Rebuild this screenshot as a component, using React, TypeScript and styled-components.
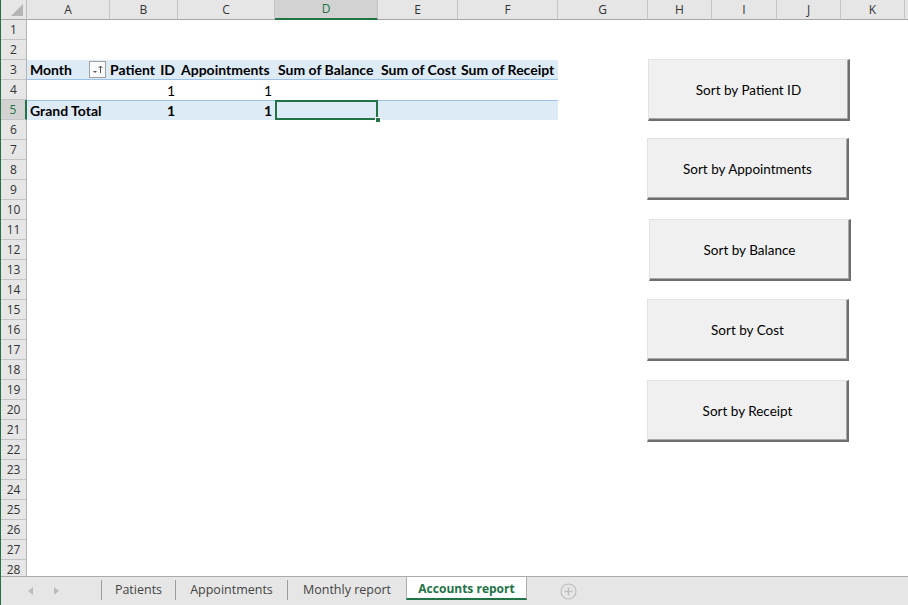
import React from "react";
import styled, { createGlobalStyle, css } from "styled-components";

const GREEN = "#217346";
const HEAD_BG = "#e6e6e6";
const PIVOT_BG = "#ddebf7";
const PIVOT_LINE = "#9bc2e6";

const GlobalStyle = createGlobalStyle`
  html, body { margin: 0; padding: 0; background: #fff; overflow: hidden; }
  *, *::before, *::after { box-sizing: border-box; }
`;

const COLS = [
  { name: "A", w: 83 },
  { name: "B", w: 68 },
  { name: "C", w: 97 },
  { name: "D", w: 103 },
  { name: "E", w: 80 },
  { name: "F", w: 100 },
  { name: "G", w: 90 },
  { name: "H", w: 64 },
  { name: "I", w: 65 },
  { name: "J", w: 64 },
  { name: "K", w: 64 },
  { name: "", w: 0 },
];

const Window = styled.div`
  width: 908px;
  height: 605px;
  display: flex;
  flex-direction: column;
  border-left: 1px solid ${GREEN};
  background: #fff;
  overflow: hidden;
`;

const Sheet = styled.div`
  position: relative;
  height: 576px;
  flex: 0 0 576px;
  overflow: hidden;
`;

const Grid = styled.div`
  display: grid;
  grid-template-columns: 26px ${COLS.filter((c) => c.w).map((c) => c.w + "px").join(" ")} 1fr;
  grid-auto-rows: 20px;
`;

const Corner = styled.div`
  background: ${HEAD_BG};
  border-right: 1px solid #bdbdbd;
  border-bottom: 1px solid #a6a6a6;
  display: flex;
  align-items: flex-end;
  justify-content: flex-end;
  padding: 0 3px 3px 0;
`;

const ColHeader = styled.div<{ $active?: boolean }>`
  background: ${(p) => (p.$active ? "#d2d2d2" : HEAD_BG)};
  color: ${(p) => (p.$active ? GREEN : "#333")};
  border-right: 1px solid #c4c4c4;
  border-bottom: ${(p) => (p.$active ? `2px solid ${GREEN}` : "1px solid #a6a6a6")};
  font-family: "Open Sans", "Noto Sans", sans-serif;
  font-size: 12px;
  display: flex;
  align-items: center;
  justify-content: center;
  padding-bottom: 1px;
`;

const RowHeader = styled.div<{ $active?: boolean }>`
  background: ${(p) => (p.$active ? "#d2d2d2" : HEAD_BG)};
  color: ${(p) => (p.$active ? GREEN : "#333")};
  border-bottom: 1px solid #c4c4c4;
  border-right: ${(p) => (p.$active ? `2px solid ${GREEN}` : "1px solid #b4b4b4")};
  font-family: "Open Sans", "Noto Sans", sans-serif;
  font-size: 12px;
  display: flex;
  align-items: center;
  justify-content: center;
`;

type Band = "head" | "total" | undefined;
type Layout = "left" | "right" | "spread" | "wide";

const Cell = styled.div<{ $band?: Band; $layout?: Layout; $bold?: boolean; $selected?: boolean }>`
  position: relative;
  display: flex;
  align-items: center;
  justify-content: ${(p) =>
    p.$layout === "spread" || p.$layout === "wide"
      ? "space-between"
      : p.$layout === "right"
      ? "flex-end"
      : "flex-start"};
  padding: ${(p) => (p.$layout === "wide" ? "0 3px 0 0" : "0 3px")};
  font-family: Lato, "Liberation Sans", sans-serif;
  font-size: 14px;
  font-weight: ${(p) => (p.$bold ? 700 : 400)};
  color: #000;
  white-space: nowrap;
  background: ${(p) => (p.$band ? PIVOT_BG : "#fff")};
  ${(p) =>
    p.$band === "head" &&
    css`
      border-bottom: 1px solid ${PIVOT_LINE};
    `}
  ${(p) =>
    p.$band === "total" &&
    css`
      border-top: 1px solid ${PIVOT_LINE};
    `}
  ${(p) =>
    p.$selected &&
    css`
      &::after {
        content: "";
        position: absolute;
        top: -1px;
        left: 0;
        right: 0;
        bottom: 0;
        border: 2px solid ${GREEN};
      }
      &::before {
        content: "";
        position: absolute;
        right: -3px;
        bottom: -3px;
        width: 6px;
        height: 6px;
        background: ${GREEN};
        border: 1px solid #fff;
        z-index: 2;
      }
    `}
`;

const FilterBtn = styled.span`
  display: inline-flex;
  width: 17px;
  height: 17px;
  margin-right: 1px;
`;

const SortButton = styled.button<{ $top: number; $left: number }>`
  position: absolute;
  top: ${(p) => p.$top}px;
  left: ${(p) => p.$left}px;
  width: 202px;
  height: 62px;
  background: #f0f0f0;
  border: none;
  border-top: 1px solid #e2e2e2;
  border-left: 1px solid #e2e2e2;
  border-right: 2px solid #6e6e6e;
  border-bottom: 2px solid #6e6e6e;
  box-shadow: inset -1px -1px 0 #a8a8a8;
  font-family: Lato, "Liberation Sans", sans-serif;
  font-size: 13.5px;
  color: #000;
  padding: 0;
  cursor: default;
`;

const TabBar = styled.div`
  height: 29px;
  flex: 0 0 29px;
  display: flex;
  align-items: flex-start;
  background: ${HEAD_BG};
  border-top: 1px solid #ababab;
`;

const Nav = styled.div`
  width: 100px;
  height: 28px;
  display: flex;
  align-items: center;
  gap: 21px;
  padding-left: 27px;
`;

const Tab = styled.div<{ $w: number; $active?: boolean }>`
  width: ${(p) => p.$w}px;
  display: flex;
  align-items: center;
  justify-content: center;
  font-family: "Open Sans", "Noto Sans", sans-serif;
  white-space: nowrap;
  ${(p) =>
    p.$active
      ? css`
          height: 24px;
          margin-top: -1px;
          background: #fff;
          border-left: 1px solid #ababab;
          border-right: 1px solid #ababab;
          border-top: 1px solid #ababab;
          border-bottom: 2px solid ${GREEN};
          color: ${GREEN};
          font-weight: 700;
          font-size: 12px;
          padding-top: 2px;
        `
      : css`
          height: 20px;
          margin-top: 3px;
          border-left: 1px solid #9c9c9c;
          color: #444;
          font-size: 12.5px;
          padding-bottom: 1px;
        `}
`;

const AddSheet = styled.div`
  margin-left: 33px;
  height: 28px;
  display: flex;
  align-items: center;
`;

const Arrow = ({ dir }: { dir: "left" | "right" }) => (
  <svg width="5" height="8" viewBox="0 0 5 8">
    <polygon points={dir === "left" ? "5,0 0,4 5,8" : "0,0 5,4 0,8"} fill="#bcbcbc" />
  </svg>
);

const FilterIcon = () => (
  <svg width="17" height="17" viewBox="0 0 17 17">
    <rect x="0.5" y="0.5" width="16" height="16" fill="#fafafa" stroke="#a0a0a0" />
    <polygon points="4,10 8,10 6,12" fill="#555" />
    <line x1="11.5" y1="5" x2="11.5" y2="12" stroke="#555" strokeWidth="1" />
    <polyline points="9.5,7 11.5,5 13.5,7" fill="none" stroke="#555" strokeWidth="1" />
  </svg>
);

const CornerTriangle = () => (
  <svg width="12" height="12" viewBox="0 0 12 12">
    <polygon points="12,0 12,12 0,12" fill="#b5b5b5" />
  </svg>
);

const PlusIcon = () => (
  <svg width="17" height="17" viewBox="0 0 17 17">
    <circle cx="8.5" cy="8.5" r="7.5" fill="none" stroke="#bfbfbf" strokeWidth="1.2" />
    <line x1="8.5" y1="4.5" x2="8.5" y2="12.5" stroke="#bfbfbf" strokeWidth="1.4" />
    <line x1="4.5" y1="8.5" x2="12.5" y2="8.5" stroke="#bfbfbf" strokeWidth="1.4" />
  </svg>
);

const BUTTONS = [
  { label: "Sort by Patient ID", top: 59, left: 647 },
  { label: "Sort by Appointments", top: 138, left: 646 },
  { label: "Sort by Balance", top: 219, left: 648 },
  { label: "Sort by Cost", top: 299, left: 646 },
  { label: "Sort by Receipt", top: 380, left: 646 },
];

const TABS = [
  { label: "Patients", w: 74 },
  { label: "Appointments", w: 112 },
  { label: "Monthly report", w: 119 },
  { label: "Accounts report", w: 121, active: true },
];

function renderCell(row: number, col: number) {
  const key = `${row}-${col}`;
  const inPivot = col <= 5;
  if (row === 3 && inPivot) {
    const content: Record<number, React.ReactNode> = {
      0: (
        <>
          <span>Month</span>
          <FilterBtn>
            <FilterIcon />
          </FilterBtn>
        </>
      ),
      1: (
        <>
          <span>Patient</span>
          <span>ID</span>
        </>
      ),
      2: "Appointments",
      3: "Sum of Balance",
      4: "Sum of Cost",
      5: "Sum of Receipt",
    };
    const layout: Layout = col === 0 ? "spread" : col === 1 ? "wide" : "left";
    return (
      <Cell key={key} $band="head" $bold $layout={layout}>
        {content[col]}
      </Cell>
    );
  }
  if (row === 4 && (col === 1 || col === 2)) {
    return (
      <Cell key={key} $layout="right">
        1
      </Cell>
    );
  }
  if (row === 5 && inPivot) {
    const isNum = col === 1 || col === 2;
    return (
      <Cell key={key} $band="total" $bold $layout={isNum ? "right" : "left"} $selected={col === 3}>
        {col === 0 ? "Grand Total" : isNum ? "1" : null}
      </Cell>
    );
  }
  return <Cell key={key} />;
}

export default function App() {
  const rows = Array.from({ length: 28 }, (_, i) => i + 1);
  return (
    <>
      <GlobalStyle />
      <Window>
        <Sheet>
          <Grid>
            <Corner>
              <CornerTriangle />
            </Corner>
            {COLS.map((c, i) => (
              <ColHeader key={"h" + i} $active={c.name === "D"}>
                {c.name}
              </ColHeader>
            ))}
            {rows.map((r) => (
              <React.Fragment key={"r" + r}>
                <RowHeader $active={r === 5}>{r}</RowHeader>
                {COLS.map((_, ci) => renderCell(r, ci))}
              </React.Fragment>
            ))}
          </Grid>
          {BUTTONS.map((b) => (
            <SortButton key={b.label} $top={b.top} $left={b.left}>
              {b.label}
            </SortButton>
          ))}
        </Sheet>
        <TabBar>
          <Nav>
            <Arrow dir="left" />
            <Arrow dir="right" />
          </Nav>
          {TABS.map((t) => (
            <Tab key={t.label} $w={t.w} $active={t.active}>
              {t.label}
            </Tab>
          ))}
          <AddSheet>
            <PlusIcon />
          </AddSheet>
        </TabBar>
      </Window>
    </>
  );
}
